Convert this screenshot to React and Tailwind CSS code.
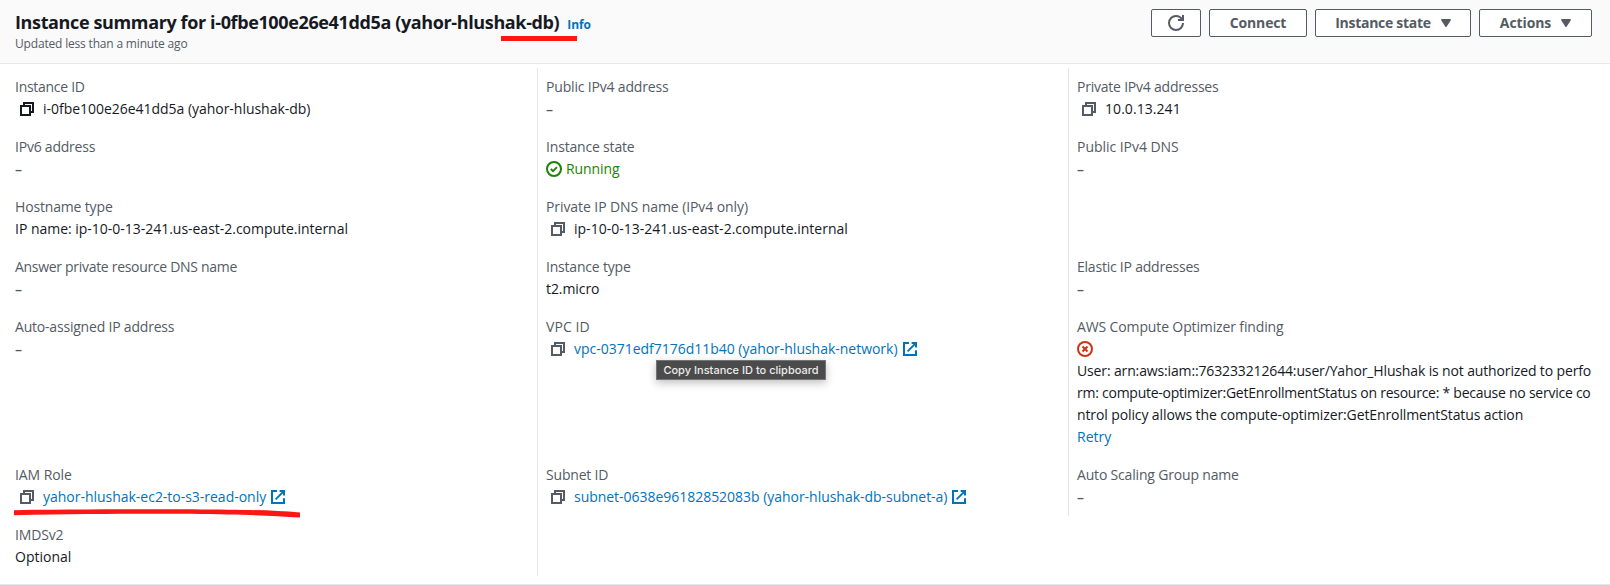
import React from "react";

function CopyIcon({ dark }) {
  return (
    <svg viewBox="0 0 16 16" className={dark ? "ml-1 mr-2 size-4 shrink-0 text-[#16191f]" : "ml-1 mr-2 size-4 shrink-0 text-[#545b64]"} fill="none" stroke="currentColor" strokeWidth="2">
      <path d="M2 5h9v9H2z" />
      <path d="M5 5V2h9v9h-3" />
    </svg>
  );
}

function ExternalIcon() {
  return (
    <svg viewBox="0 0 16 16" className="ml-1 size-4 shrink-0 text-[#0073bb]" fill="none" stroke="currentColor" strokeWidth="2">
      <path d="M7 2H2v12h12V9.2" />
      <path d="M9.6 2H14v4.4" />
      <path d="M5.6 10.4 14 2" strokeWidth="1.8" />
    </svg>
  );
}

function RefreshIcon() {
  return (
    <svg viewBox="0 0 16 16" className="size-4" fill="none" stroke="currentColor" strokeWidth="2">
      <path d="M15 8c0 3.87-3.13 7-7 7s-7-3.13-7-7 3.13-7 7-7c2.79 0 5.2 1.63 6.33 4" />
      <path d="M15 0v5h-5" />
    </svg>
  );
}

function Caret() {
  return (
    <svg viewBox="0 0 16 16" className="ml-[7px] size-4" fill="currentColor" stroke="currentColor" strokeWidth="1.4" strokeLinejoin="round">
      <path d="M3.8 4.8h8.4L8 11.3z" />
    </svg>
  );
}

function Button({ className, children }) {
  return (
    <button className={`flex h-7 items-center justify-center whitespace-nowrap rounded-[2px] border border-[#545b64] bg-white text-sm font-bold text-[#545b64] ${className}`}>
      {children}
    </button>
  );
}

function Cell({ label, tracking, line = true, children }) {
  return (
    <div className={`border-l px-2 py-2 ${line ? "border-[#e4e8e8]" : "border-transparent"}`}>
      {label && <div className={`h-[22px] text-[#545b64] ${tracking}`}>{label}</div>}
      {children}
    </div>
  );
}

function Value({ tracking = "", children }) {
  return <div className={`flex h-[22px] items-center text-[#16191f] ${tracking}`}>{children}</div>;
}

function Dash() {
  return <div className="h-[22px] font-semibold text-[#545b64]">–</div>;
}

function Link({ tracking, children }) {
  return <a className={`text-[#0073bb] ${tracking}`}>{children}</a>;
}

export default function App() {
  return (
    <div className="relative h-[585px] w-[1610px] overflow-hidden bg-white font-['Open_Sans',sans-serif] text-sm leading-[22px] font-medium whitespace-nowrap [font-stretch:99%]">
      <header className="flex h-16 items-start justify-between border-b border-[#e6e9e9] bg-[#fafafa] pl-[15px] pr-[18px] [font-stretch:100%]">
        <div className="pt-[11px]">
          <div className="flex items-baseline">
            <h1 className="text-lg leading-[22px] font-bold tracking-[-0.37px] text-[#16191f]">Instance summary for i-0fbe100e26e41dd5a (yahor-hlushak-db)</h1>
            <a className="ml-2 text-xs font-bold tracking-[-0.15px] text-[#0073bb]">Info</a>
          </div>
          <div className="mt-0.5 text-xs leading-[18px] tracking-[-0.18px] text-[#545b64]">Updated less than a minute ago</div>
        </div>
        <div className="flex gap-2 pt-[9px]">
          <Button className="w-[50px]"><RefreshIcon /></Button>
          <Button className="w-[98px] tracking-[-0.15px]">Connect</Button>
          <Button className="w-[156px] pl-[3px] tracking-[-0.28px]">Instance state<Caret /></Button>
          <Button className="w-[113px] pl-[3px] tracking-[-0.1px]">Actions<Caret /></Button>
        </div>
      </header>

      <main className="grid grid-cols-[531px_531px_531px] border-b border-[#e4e8e8] pt-1 pb-2 pl-1.5">
        <Cell line={false} label="Instance ID" tracking="tracking-[-0.28px]">
          <Value tracking="tracking-[-0.03px]"><CopyIcon dark />i-0fbe100e26e41dd5a (yahor-hlushak-db)</Value>
        </Cell>
        <Cell label="Public IPv4 address" tracking="tracking-[-0.18px]"><Dash /></Cell>
        <Cell label="Private IPv4 addresses" tracking="tracking-[-0.22px]">
          <Value tracking="tracking-[0.06px]"><CopyIcon />10.0.13.241</Value>
        </Cell>

        <Cell line={false} label="IPv6 address" tracking="tracking-[-0.22px]"><Dash /></Cell>
        <Cell label="Instance state" tracking="tracking-[-0.18px]">
          <div className="flex h-[22px] items-center gap-1 tracking-[-0.1px] text-[#1d8102]">
            <svg viewBox="0 0 16 16" className="size-4" fill="none" stroke="currentColor" strokeWidth="2">
              <circle cx="8" cy="8" r="7" />
              <path d="m4.8 8 2.3 2.2 3.8-4" strokeWidth="1.8" />
            </svg>
            Running
          </div>
        </Cell>
        <Cell label="Public IPv4 DNS" tracking="tracking-[-0.04px]"><Dash /></Cell>

        <Cell line={false} label="Hostname type" tracking="tracking-[-0.16px]">
          <Value tracking="tracking-[-0.02px]">IP name: ip-10-0-13-241.us-east-2.compute.internal</Value>
        </Cell>
        <Cell label="Private IP DNS name (IPv4 only)" tracking="tracking-[-0.08px]">
          <Value tracking="tracking-[0.01px]"><CopyIcon />ip-10-0-13-241.us-east-2.compute.internal</Value>
        </Cell>
        <Cell />

        <Cell line={false} label="Answer private resource DNS name" tracking="tracking-[-0.3px]"><Dash /></Cell>
        <Cell label="Instance type" tracking="tracking-[-0.2px]">
          <Value tracking="tracking-[-0.08px]">t2.micro</Value>
        </Cell>
        <Cell label="Elastic IP addresses" tracking="tracking-[-0.22px]"><Dash /></Cell>

        <Cell line={false} label="Auto-assigned IP address" tracking="tracking-[-0.2px]"><Dash /></Cell>
        <Cell label="VPC ID" tracking="tracking-[0.08px]">
          <Value><CopyIcon /><Link tracking="tracking-[-0.02px]">vpc-0371edf7176d11b40 (yahor-hlushak-network)</Link><ExternalIcon /></Value>
        </Cell>
        <Cell label="AWS Compute Optimizer finding" tracking="tracking-[-0.13px]">
          <div className="flex h-[22px] items-center text-[#d13212]">
            <svg viewBox="0 0 16 16" className="size-4" fill="none" stroke="currentColor" strokeWidth="2">
              <circle cx="8" cy="8" r="7" />
              <path d="m5.5 5.5 5 5M10.5 5.5l-5 5" />
            </svg>
          </div>
          <Value tracking="tracking-[-0.14px]">User: arn:aws:iam::763233212644:user/Yahor_Hlushak is not authorized to perfo</Value>
          <Value tracking="tracking-[-0.25px]">rm: compute-optimizer:GetEnrollmentStatus on resource: * because no service co</Value>
          <Value tracking="tracking-[-0.11px]">ntrol policy allows the compute-optimizer:GetEnrollmentStatus action</Value>
          <Value><Link tracking="tracking-[0.02px]">Retry</Link></Value>
        </Cell>

        <Cell line={false} label="IAM Role" tracking="tracking-[-0.09px]">
          <Value><CopyIcon /><Link tracking="tracking-[-0.02px]">yahor-hlushak-ec2-to-s3-read-only</Link><ExternalIcon /></Value>
        </Cell>
        <Cell label="Subnet ID" tracking="tracking-[-0.19px]">
          <Value><CopyIcon /><Link tracking="tracking-[-0.03px]">subnet-0638e96182852083b (yahor-hlushak-db-subnet-a)</Link><ExternalIcon /></Value>
        </Cell>
        <Cell label="Auto Scaling Group name" tracking="tracking-[-0.18px]"><Dash /></Cell>

        <Cell line={false} label="IMDSv2" tracking="tracking-[-0.15px]">
          <Value>Optional</Value>
        </Cell>
        <Cell />
      </main>

      <div className="absolute left-[501px] top-9 h-[5px] w-[76px] bg-[#fd1616]" />
      <svg viewBox="0 0 288 10" className="absolute left-[13px] top-[509px] h-2.5 w-72" fill="#fd1616">
        <path d="M1 1.2C90 .2 160 .2 215 .7 245 1 265 1.6 287 3.6V8.6C265 7 245 6 215 5.5 160 4.4 90 4.6 1 6.2z" />
      </svg>
      <div className="absolute left-[656px] top-[360px] flex h-5 w-[170px] items-center justify-center border border-[#747474] bg-[#4b4b4b] font-['Inter',sans-serif] text-[11px] font-medium tracking-[0.01px] text-[#ececec] shadow-[0_3px_8px_rgba(0,0,0,0.25)]">
        Copy Instance ID to clipboard
      </div>
    </div>
  );
}
